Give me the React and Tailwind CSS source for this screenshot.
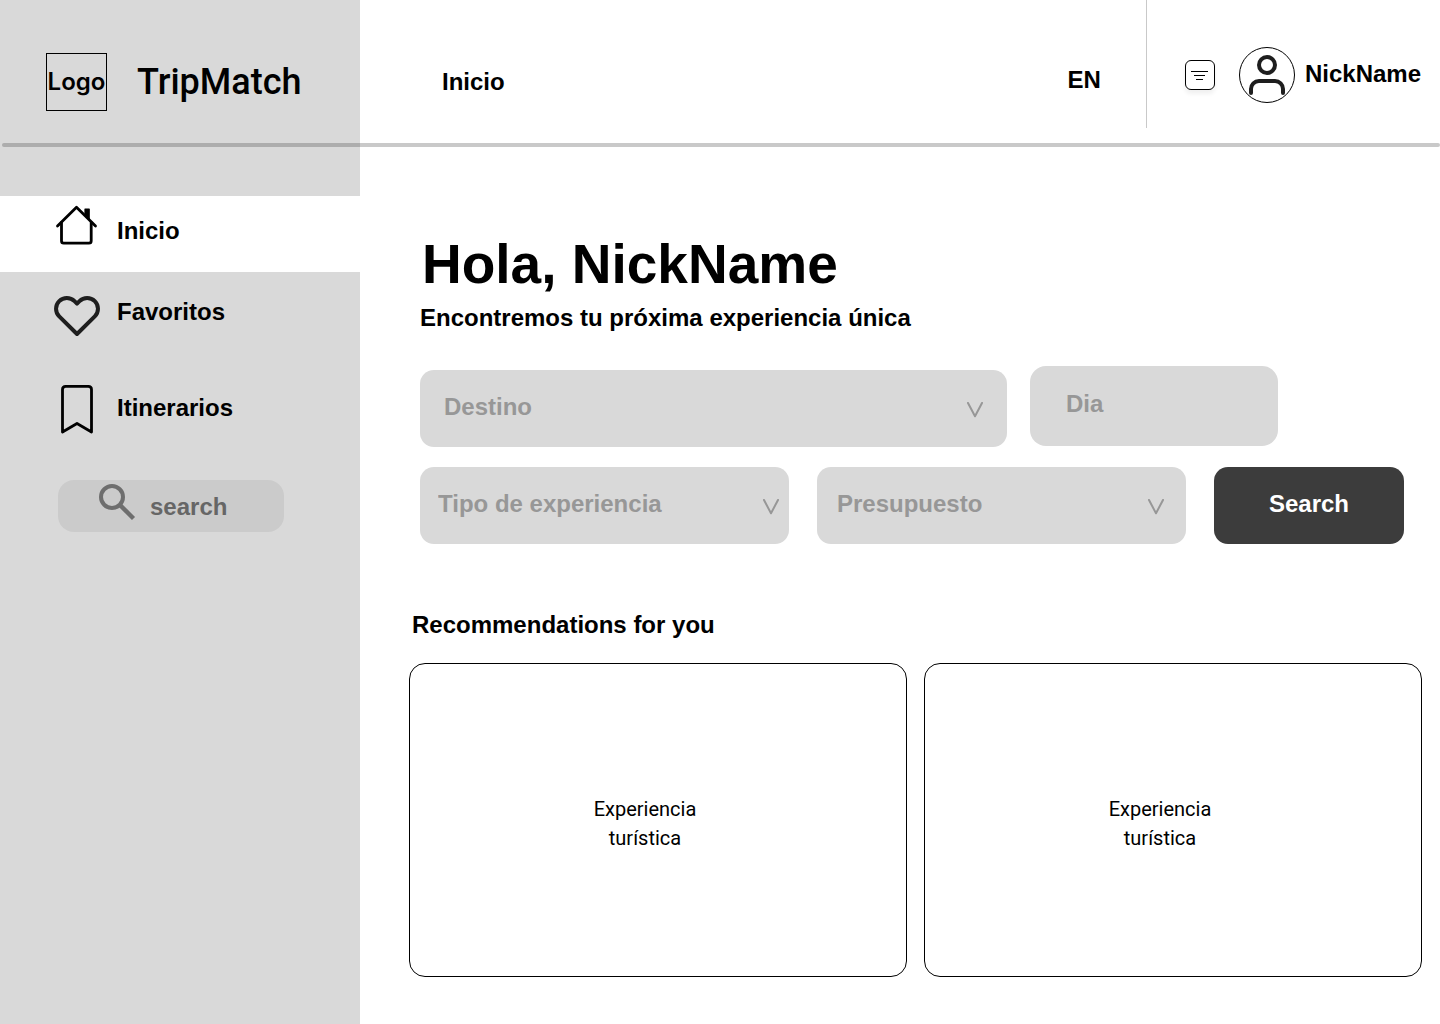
import React from "react";

function HomeIcon() {
  return (
    <svg viewBox="0 0 48 56" className="h-14 w-12 shrink-0" fill="none" stroke="#000" strokeWidth="2.8" strokeLinecap="round" strokeLinejoin="round" aria-hidden="true">
      <path d="M4.5 24 L23.5 5.3 L42.5 24" />
      <path d="M8.5 20.5 V39 Q8.5 41.2 10.7 41.2 H36 Q38.2 41.2 38.2 39 V20.5" />
      <path d="M32 7 H36.2 V17 L32 13 Z" fill="#000" strokeWidth="1.2" />
    </svg>
  );
}

function HeartIcon() {
  return (
    <svg viewBox="0 0 48 56" className="h-14 w-12 shrink-0" fill="none" stroke="#1e1e1e" strokeWidth="4" strokeLinejoin="round" aria-hidden="true">
      <path d="M41.8 18.1 a10.8 10.8 0 0 0 -15.3 0 L24 20.6 L21.5 18.1 a10.8 10.8 0 0 0 -15.3 15.3 L24 51 L41.8 33.4 a10.8 10.8 0 0 0 0 -15.3 z" />
    </svg>
  );
}

function BookmarkIcon() {
  return (
    <svg viewBox="0 0 48 56" className="h-14 w-12 shrink-0" fill="none" stroke="#000" strokeWidth="2.8" strokeLinejoin="round" aria-hidden="true">
      <path d="M9.5 53 V10.5 Q9.5 7.3 12.7 7.3 H35.3 Q38.5 7.3 38.5 10.5 V53 L24 44.5 Z" />
    </svg>
  );
}

function SearchIcon() {
  return (
    <svg viewBox="0 0 38 46" className="h-[46px] w-[38px] shrink-0" fill="none" stroke="#6e6e6e" strokeWidth="4" aria-hidden="true">
      <circle cx="14" cy="14" r="11" />
      <path d="M21.5 21.5 L35.5 35.5" strokeWidth="4.4" />
    </svg>
  );
}

function UserIcon() {
  return (
    <svg viewBox="0 0 56 56" className="size-14 shrink-0" fill="none" aria-hidden="true">
      <circle cx="28" cy="28" r="27.5" stroke="#000" />
      <circle cx="28" cy="18" r="8" stroke="#1e1e1e" strokeWidth="4" />
      <path d="M12 46 V42 A8 8 0 0 1 20 34 H36 A8 8 0 0 1 44 42 V46" stroke="#1e1e1e" strokeWidth="4" strokeLinecap="round" />
    </svg>
  );
}

function NavItem({ icon, label, className }) {
  return (
    <a href="#" className={`flex items-center gap-4 pl-[53px] ${className}`}>
      {icon}
      <span className="pt-0.5">{label}</span>
    </a>
  );
}

function SelectField({ label, selectClass, chevronClass, className = "" }) {
  return (
    <div className={`relative ${className}`}>
      <select
        aria-label={label}
        defaultValue=""
        className={`h-[77px] w-full appearance-none rounded-[14px] bg-[#d9d9d9] pb-1 text-[#979797] ${selectClass}`}
      >
        <option value="">{label}</option>
      </select>
      <svg viewBox="0 0 18 16" className={`pointer-events-none absolute top-8 h-4 w-[18px] ${chevronClass}`} fill="none" stroke="#979797" strokeWidth="2" strokeLinecap="round" strokeLinejoin="round" aria-hidden="true">
        <path d="M2 1 L9 14.3 L16 1" />
      </svg>
    </div>
  );
}

function ExperienceCard() {
  return (
    <article className="flex h-[314px] items-center justify-center rounded-2xl border border-black pr-[26px] pt-2 text-center font-['Roboto',sans-serif] text-[20px] leading-[29px] font-normal">
      <p>
        Experiencia
        <br />
        turística
      </p>
    </article>
  );
}

export default function App() {
  return (
    <div className="flex min-h-screen bg-white font-['Liberation_Sans',sans-serif] text-[24px] leading-9 font-bold text-black">
      <aside className="w-1/4 shrink-0 bg-[#d9d9d9]">
        <div className="flex h-[143px] items-center gap-[30px] pt-[21px] pl-[46px]">
          <div className="flex h-[58px] w-[61px] shrink-0 items-center justify-center border border-black font-['Inter',sans-serif] text-[24px] font-semibold">Logo</div>
          <span className="font-['Roboto',sans-serif] text-[36px] font-medium">TripMatch</span>
        </div>
        <div className="ml-0.5 h-1 rounded-l-full bg-[#adadad]" />
        <nav className="pt-[49px]">
          <NavItem icon={<HomeIcon />} label="Inicio" className="h-[76px] bg-white pb-2" />
          <NavItem icon={<HeartIcon />} label="Favoritos" className="h-[78px]" />
          <NavItem icon={<BookmarkIcon />} label="Itinerarios" className="mt-[19px] h-[76px]" />
        </nav>
        <label className="mt-[35px] mr-[76px] ml-[58px] flex h-[52px] items-center gap-3.5 rounded-2xl bg-[#cbcbcb] pl-10">
          <SearchIcon />
          <input type="search" aria-label="search" placeholder="search" className="w-full min-w-0 bg-transparent pt-0.5 text-[#666] outline-none placeholder:text-[#666] placeholder:opacity-100" />
        </label>
      </aside>

      <div className="min-w-0 flex-1">
        <header className="flex h-[143px] items-start">
          <a href="#" className="mt-16 ml-[82px]">Inicio</a>
          <button type="button" className="mt-[62px] mr-[45px] ml-auto">EN</button>
          <div className="flex h-32 shrink-0 items-center border-l border-[#c9c9c9] pt-[22px] pr-[19px] pl-[38px]">
            <button type="button" aria-label="Filtros" className="mr-6 flex size-[30px] items-center justify-center rounded-md border border-black bg-white shadow-[0_4px_4px_rgba(0,0,0,0.06)]">
              <svg viewBox="0 0 28 28" className="size-7" stroke="#000" fill="none" aria-hidden="true">
                <path d="M5 10.5 H22 M8 14.5 H19 M10 18.5 H17" />
              </svg>
            </button>
            <a href="#" className="flex items-center gap-2.5">
              <UserIcon />
              <span className="pb-0.5">NickName</span>
            </a>
          </div>
        </header>
        <div className="h-1 rounded-r-full bg-[#c9c9c9]" />

        <main className="pb-[47px]">
          <form className="pt-[85px] pr-9 pl-[60px]">
            <h1 className="pl-0.5 text-[55px] leading-[64px]">Hola, NickName</h1>
            <p className="mt-1">Encontremos tu próxima experiencia única</p>
            <div className="mt-[30px] grid grid-cols-[587fr_248fr] items-start gap-[23px] pr-[126px]">
              <SelectField label="Destino" className="mt-1" selectClass="pl-6" chevronClass="right-[23px]" />
              <input
                type="text"
                aria-label="Dia"
                placeholder="Dia"
                className="h-20 w-full min-w-0 rounded-2xl bg-[#d9d9d9] pb-1 pl-9 outline-none placeholder:text-[#979797] placeholder:opacity-100"
              />
            </div>
            <div className="mt-5 grid grid-cols-[369fr_369fr_190fr] gap-7">
              <SelectField label="Tipo de experiencia" selectClass="pl-[18px]" chevronClass="right-[9px]" />
              <SelectField label="Presupuesto" selectClass="pl-5" chevronClass="right-[21px]" />
              <button type="submit" className="h-[77px] rounded-[14px] bg-[#3c3c3c] pb-1 text-white">Search</button>
            </div>
          </form>

          <section className="pt-[63px] pr-[18px] pl-[49px]">
            <h2 className="pl-[3px]">Recommendations for you</h2>
            <div className="mt-5 grid grid-cols-2 gap-[17px]">
              <ExperienceCard />
              <ExperienceCard />
            </div>
          </section>
        </main>
      </div>
    </div>
  );
}
